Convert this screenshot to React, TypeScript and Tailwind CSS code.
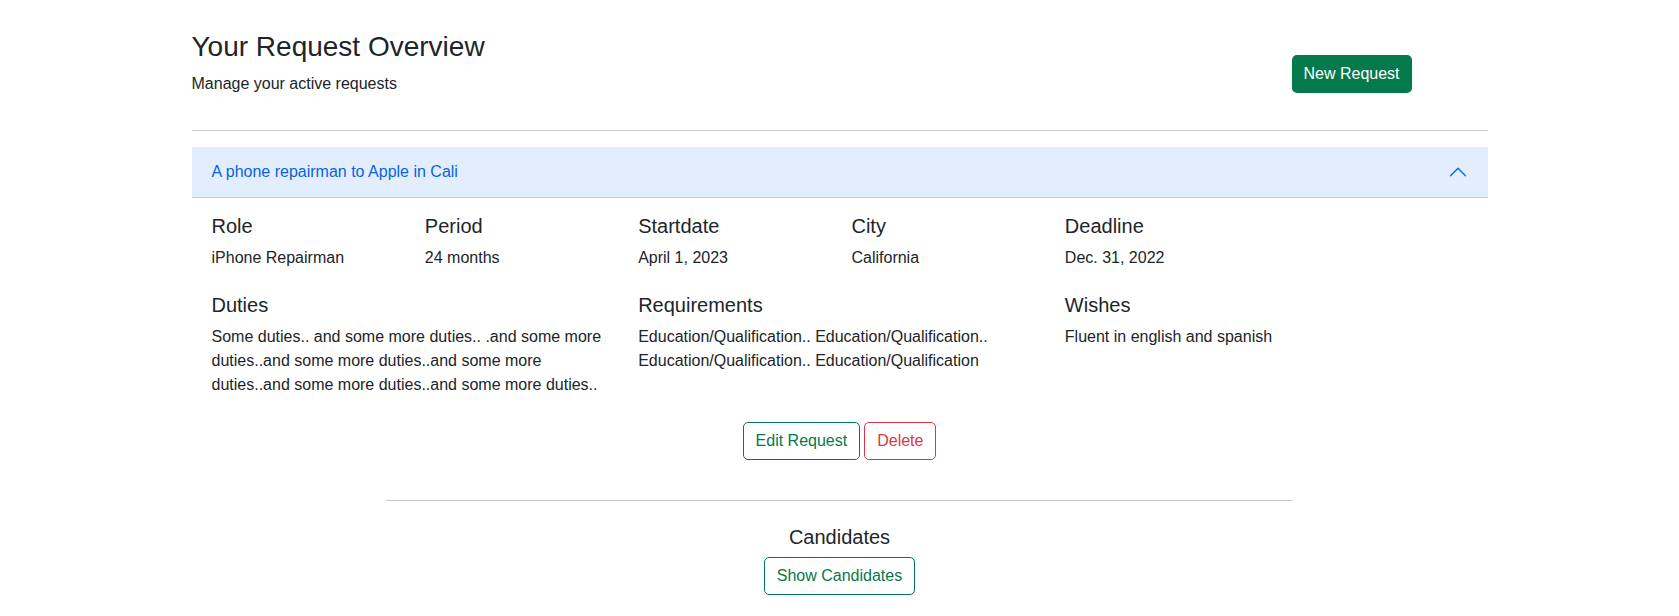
import React from 'react';

const details = [
  { label: 'Role', value: 'iPhone Repairman' },
  { label: 'Period', value: '24 months' },
  { label: 'Startdate', value: 'April 1, 2023' },
  { label: 'City', value: 'California' },
  { label: 'Deadline', value: 'Dec. 31, 2022' },
];

const longFields = [
  {
    label: 'Duties',
    value:
      'Some duties.. and some more duties.. .and some more duties..and some more duties..and some more duties..and some more duties..and some more duties..',
  },
  {
    label: 'Requirements',
    value:
      'Education/Qualification.. Education/Qualification.. Education/Qualification.. Education/Qualification',
  },
  { label: 'Wishes', value: 'Fluent in english and spanish' },
];

function ChevronUp() {
  return (
    <svg className="w-5 h-5" viewBox="0 0 16 16" fill="#0c63e4">
      <path
        transform="rotate(180 8 8)"
        d="M1.646 4.646a.5.5 0 0 1 .708 0L8 10.293l5.646-5.647a.5.5 0 0 1 .708.708l-6 6a.5.5 0 0 1-.708 0l-6-6a.5.5 0 0 1 0-.708z"
      />
    </svg>
  );
}

export default function App() {
  return (
    <div
      className="min-h-screen bg-white text-[#212529]"
      style={{ fontFamily: '"Liberation Sans", Arial, sans-serif' }}
    >
      <div className="mx-auto w-[1320px] px-3 pt-[30px]">
        <div className="flex">
          <div className="flex-1">
            <h3 className="text-[28px] leading-[1.2] mb-2">Your Request Overview</h3>
            <p className="text-base leading-6">Manage your active requests</p>
          </div>
          <div className="w-[196px]">
            <button className="mt-[25px] h-[38px] px-3 rounded-[5px] bg-[#03794c] text-white text-base">
              New Request
            </button>
          </div>
        </div>

        <hr className="mt-[34px] mb-4 border-t border-[#c8c9ca]" />

        <div>
          <div className="h-[51px] flex items-center justify-between px-5 bg-[#e2eefd] border-b border-[#c8d2de] text-[#0a62e0] text-base">
            <span>A phone repairman to Apple in Cali</span>
            <ChevronUp />
          </div>

          <div className="pt-4">
            <div className="px-5">
              <div className="grid grid-cols-6 gap-x-6">
                {details.map((d) => (
                  <div key={d.label}>
                    <h5 className="text-xl leading-6 mb-2">{d.label}</h5>
                    <p className="text-base leading-6">{d.value}</p>
                  </div>
                ))}
              </div>

              <div className="grid grid-cols-6 gap-x-6 mt-[23px]">
                {longFields.map((d) => (
                  <div key={d.label} className="col-span-2">
                    <h5 className="text-xl leading-6 mb-2">{d.label}</h5>
                    <p className="text-base leading-6">{d.value}</p>
                  </div>
                ))}
              </div>

              <div className="flex justify-center gap-1 mt-[25px]">
                <button className="h-[38px] px-3 rounded-[5px] border border-[#03794c] text-[#03794c] text-base">
                  Edit Request
                </button>
                <button className="h-[38px] px-3 rounded-[5px] border border-[#dc3545] text-[#dc3545] text-base">
                  Delete
                </button>
              </div>
            </div>

            <hr className="w-[907px] mx-auto mt-[40px] border-t border-[#c8c9ca]" />

            <div className="flex flex-col items-center mt-6">
              <h5 className="text-xl leading-6 mb-2">Candidates</h5>
              <button className="h-[38px] px-3 rounded-[5px] border border-[#03794c] text-[#03794c] text-base">
                Show Candidates
              </button>
            </div>
          </div>
        </div>
      </div>
    </div>
  );
}
